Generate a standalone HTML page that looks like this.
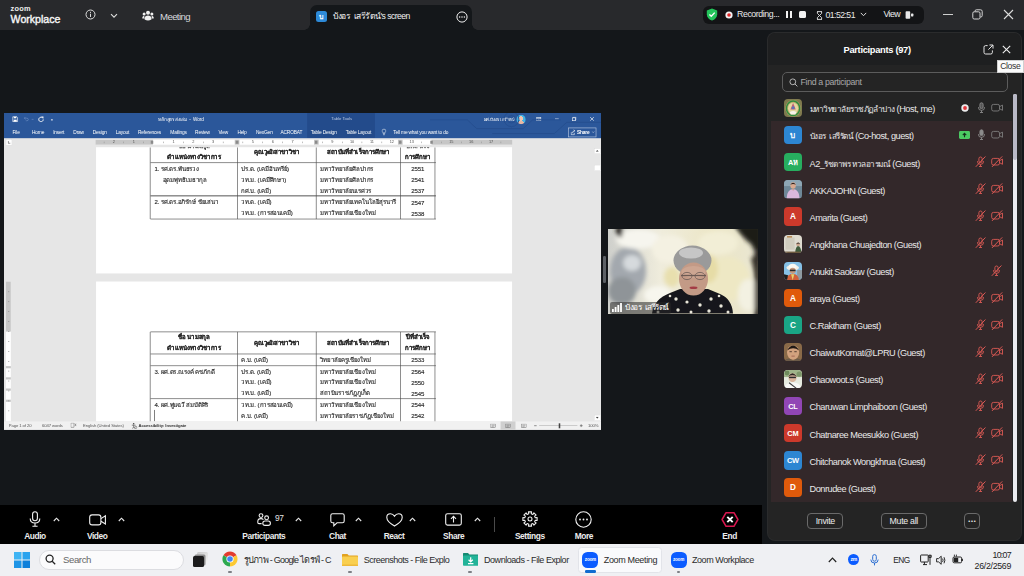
<!DOCTYPE html>
<html lang="th">
<head>
<meta charset="utf-8">
<title>Zoom Meeting</title>
<style>
*{box-sizing:border-box;margin:0;padding:0}
html,body{width:1024px;height:576px;overflow:hidden;background:#14171a;font-family:"Liberation Sans","DejaVu Sans",sans-serif;color:#e8e8e8}
.abs{position:absolute}
#stage{position:relative;width:1024px;height:576px;overflow:hidden;background:#14171a}
/* ---------- title bar ---------- */
#titlebar{left:0;top:0;width:1024px;height:30px;background:#28292c}
#tab{left:310px;top:5px;width:162px;height:25px;background:#14171a;border-radius:7px 7px 0 0}
#tab:before,#tab:after{content:"";position:absolute;bottom:0;width:6px;height:6px;background:radial-gradient(circle at 0 0,#28292c 5.5px,#14171a 6px)}
#tab:before{left:-6px}
#tab:after{right:-6px;background:radial-gradient(circle at 100% 0,#28292c 5.5px,#14171a 6px)}
.t{position:absolute;white-space:nowrap;line-height:1}
/* ---------- word ---------- */
#word{left:4px;top:112.6px;width:1920px;height:1019px;background:#e6e6e6;overflow:hidden;color:#222;transform:scale(.31094);transform-origin:0 0}
#wtitle{left:0;top:0;width:1920px;height:80.5px;background:#2b579a}
.w{line-height:1}
.rt{font-size:15.5px;color:#fff;text-align:center;letter-spacing:-.55px;line-height:18px}
.d{font-size:19.5px;line-height:36px;color:#2a2a2a;letter-spacing:-.25px;-webkit-text-stroke:.45px #2a2a2a}
.db{font-weight:bold;color:#111}
.sb{font-size:13.5px;color:#555;letter-spacing:-.3px;line-height:16px}
/* ---------- bottom ---------- */
#toolbar{left:0;top:504.7px;width:762.3px;height:39.3px;background:#000}
#taskbar{left:0;top:543.7px;width:1024px;height:32.3px;background:#eff0f3;color:#1b1b1b}
.tl{font-size:8.4px;font-weight:bold;color:#ededed;text-align:center;letter-spacing:-.42px;line-height:10px}
.kt{font-size:9px;color:#2b2b2b;line-height:11px}
.kc{font-size:8.8px;color:#222;letter-spacing:-.3px;line-height:10px}
.zi{width:16px;height:16px;border-radius:5.5px;background:#0b5cff;color:#fff;text-align:center}
.zi span{display:block;font-size:4.6px;font-weight:bold;line-height:16px;letter-spacing:-.2px}
/* ---------- participants ---------- */
#panel{left:768px;top:33px;width:253px;height:507px;background:#242424;border-radius:7px;overflow:hidden;box-shadow:0 0 0 1px #2a2b2c}
#phead{left:0;top:0;width:253px;height:31.5px;background:#1e1f20}
.av{width:18.2px;height:18.2px;border-radius:4px;overflow:hidden;text-align:center;color:#fff;font-weight:bold;line-height:19.4px}
.av span{display:block;letter-spacing:-.2px}
.av svg{display:block}
.pn{font-size:9.2px;color:#e9e9e9;letter-spacing:-.46px;line-height:11px}
.th{font-size:8.2px;letter-spacing:-.5px}
.pb{border:1px solid #6a6a6a;border-radius:4px;text-align:center;font-size:8.8px;color:#ededed;line-height:14.6px;letter-spacing:-.3px}
</style>
</head>
<body>
<div id="stage">

<!-- TITLE BAR -->
<div id="titlebar" class="abs">
  <div class="t" id="zm" style="left:10.6px;top:4.6px;font-size:7.4px;font-weight:bold;color:#ededed;letter-spacing:.25px">zoom</div>
  <div class="t" id="wp" style="left:10.6px;top:14.4px;font-size:10.6px;color:#f5f5f5;letter-spacing:0px;-webkit-text-stroke:.4px #f5f5f5">Workplace</div>
  <svg class="abs" style="left:85px;top:8.5px" width="11" height="11" viewBox="0 0 11 11"><circle cx="5.5" cy="5.5" r="4.5" fill="none" stroke="#ddd" stroke-width="1"/><rect x="5" y="4.7" width="1" height="3.3" fill="#ddd"/><rect x="5" y="2.8" width="1" height="1.1" fill="#ddd"/></svg>
  <svg class="abs" style="left:109.5px;top:12.5px" width="8" height="6" viewBox="0 0 8 6"><path d="M1 1.2 L4 4.2 L7 1.2" fill="none" stroke="#ddd" stroke-width="1.1"/></svg>
  <svg class="abs" style="left:142px;top:10px" width="12" height="12" viewBox="0 0 12 12" fill="#f0f0f0"><circle cx="6" cy="2.7" r="2"/><circle cx="2.1" cy="3.9" r="1.5"/><circle cx="9.9" cy="3.9" r="1.5"/><path d="M2.6 8.2 C2.6 6.4 4.2 5.4 6 5.4 C7.8 5.4 9.4 6.4 9.4 8.2 L9.4 9.6 Q6 11.6 2.6 9.6 Z"/><path d="M0.3 7.8 C0.3 6.6 1.2 6 2.3 6 L2.3 8.6 L0.3 8.6 Z"/><path d="M11.7 7.8 C11.7 6.6 10.8 6 9.7 6 L9.7 8.6 L11.7 8.6 Z"/></svg>
  <div class="t" id="mt" style="left:160px;top:11.7px;font-size:9.6px;color:#d6d9dd;letter-spacing:-.6px">Meeting</div>

  <!-- right pill -->
  <div class="abs" style="left:702.5px;top:6px;width:221.5px;height:17.5px;border-radius:6px;background:#131416"></div>
  <svg class="abs" style="left:705.5px;top:8px" width="12" height="13" viewBox="0 0 12 13"><path d="M6 0.6 L11.2 2.4 V6.2 C11.2 9.4 8.8 11.6 6 12.6 C3.2 11.6 0.8 9.4 0.8 6.2 V2.4 Z" fill="#23c45b"/><path d="M3.4 6.4 L5.3 8.3 L8.7 4.6" fill="none" stroke="#fff" stroke-width="1.4"/></svg>
  <svg class="abs" style="left:724.5px;top:10.5px" width="8" height="8" viewBox="0 0 8 8"><circle cx="4" cy="4" r="3.6" fill="#f3f3f3"/><circle cx="4" cy="4" r="1.8" fill="#e02828"/></svg>
  <div class="t" id="rec" style="left:737px;top:10.2px;font-size:8.8px;color:#e9e9e9;letter-spacing:-.43px">Recording...</div>
  <div class="abs" style="left:786px;top:11px;width:2px;height:7px;background:#f2f2f2"></div>
  <div class="abs" style="left:789.5px;top:11px;width:2px;height:7px;background:#f2f2f2"></div>
  <div class="abs" style="left:798.5px;top:11px;width:7px;height:7px;border-radius:1.5px;background:#f2f2f2"></div>
  <svg class="abs" style="left:816px;top:10.5px" width="7" height="9" viewBox="0 0 7 9"><path d="M1 0.6 H6 M1 8.4 H6 M1.4 0.8 V2.4 L3.5 4.5 L5.6 2.4 V0.8 M1.4 8.2 V6.6 L3.5 4.5 L5.6 6.6 V8.2" fill="none" stroke="#e6e6e6" stroke-width=".9"/></svg>
  <div class="t" id="tm" style="left:825.5px;top:10.6px;font-size:8.7px;color:#e9e9e9;letter-spacing:-.55px">01:52:51</div>
  <svg class="abs" style="left:860px;top:12px" width="7" height="5" viewBox="0 0 7 5"><path d="M0.8 0.9 L3.5 3.7 L6.2 0.9" fill="none" stroke="#ddd" stroke-width="1"/></svg>
  <div class="t" id="vw" style="left:883.5px;top:10.2px;font-size:8.8px;color:#ededed;letter-spacing:-.6px">View</div>
  <svg class="abs" style="left:904.5px;top:10.5px" width="9" height="8" viewBox="0 0 9 8"><rect x="0.6" y="0.3" width="4.6" height="7.4" rx=".8" fill="#e8e8e8"/><rect x="6" y="2.6" width="2.4" height="2.8" rx=".6" fill="#e8e8e8"/></svg>
  <!-- window controls -->
  <div class="abs" style="left:942.5px;top:14px;width:10px;height:1px;background:#cfcfcf"></div>
  <svg class="abs" style="left:971.5px;top:9px" width="11" height="11" viewBox="0 0 11 11" fill="none" stroke="#d4d4d4" stroke-width="1"><rect x="0.8" y="2.8" width="7.2" height="7.2" rx="1.4"/><path d="M3 2.6 V2.2 Q3 0.8 4.4 0.8 H8.6 Q10.2 0.8 10.2 2.4 V6.6 Q10.2 8 8.8 8 H8.2"/></svg>
  <svg class="abs" style="left:1002.5px;top:9px" width="11" height="11" viewBox="0 0 11 11"><path d="M1 1 L10 10 M10 1 L1 10" stroke="#dcdcdc" stroke-width="1.1" fill="none"/></svg>
</div>
<div id="tab" class="abs">
  <div class="abs" style="left:6.2px;top:6.3px;width:10.6px;height:10.6px;border-radius:2.5px;background:#2d8ad8"></div>
  <div class="t" style="left:6.2px;top:7.6px;width:10.6px;text-align:center;font-size:7px;color:#fff;font-weight:bold">บ</div>
  <div class="t" id="tabt" style="left:23.3px;top:7px;font-size:8.6px;color:#f2f2f2;letter-spacing:-.55px">บังอร&nbsp; เสรีรัตน์'s screen</div>
  <svg class="abs" style="left:145.5px;top:5.7px" width="12" height="12" viewBox="0 0 12 12"><circle cx="6" cy="6" r="5.1" fill="none" stroke="#f0f0f0" stroke-width="1"/><circle cx="3.6" cy="6" r=".75" fill="#f0f0f0"/><circle cx="6" cy="6" r=".75" fill="#f0f0f0"/><circle cx="8.4" cy="6" r=".75" fill="#f0f0f0"/></svg>
</div>

<!-- WORD WINDOW -->
<div id="word" class="abs">
<div id="wtitle" class="abs"></div>
<div class="abs" style="left:974.5px;top:0;width:218.70000000000005px;height:80px;background:#234b8b"></div>
<svg class="abs" style="left:26.0px;top:9.899999999999999px" width="20" height="20" viewBox="0 0 28 28"><path d="M3 3 H22 L25 6 V25 H3 Z" fill="none" stroke="#fff" stroke-width="3"/><rect x="8" y="3" width="11" height="7" fill="#fff"/><rect x="7" y="16" width="14" height="9" fill="#fff"/></svg>
<svg class="abs" style="left:62.7px;top:11.399999999999999px" width="18" height="17" viewBox="0 0 26 24"><path d="M4 8 H15 Q22 8 22 14 Q22 20 15 20 H10 M9 2 L3 8 L9 14" fill="none" stroke="#6f8fc4" stroke-width="3"/></svg>
<div class="abs" style="left:88.8px;top:19.3px;width:6px;height:2px;background:#6f8fc4"></div>
<svg class="abs" style="left:109.0px;top:9.899999999999999px" width="20" height="20" viewBox="0 0 28 28"><path d="M21 8 A10 10 0 1 0 24 15" fill="none" stroke="#fff" stroke-width="4.4"/><path d="M15 2 H25 V12 Z" fill="#fff"/></svg>
<div class="abs" style="left:151.4px;top:20.4px;width:6px;height:4px;background:#cfd9ea"></div>
<div class="t w" style="left:496.2px;top:12.899999999999999px;font-size:15px;color:#fff;letter-spacing:-.3px" id="wtt">หลักสูตรส่งเล่ม&nbsp; -&nbsp; Word</div>
<div class="t w" style="left:1052.6px;top:12.899999999999999px;font-size:13.5px;color:#b9c8e2">Table Tools</div>
<div class="t w" style="left:1543.7px;top:12.899999999999999px;font-size:14px;color:#fff;letter-spacing:-.5px" id="wuser">ผศ.บังอร เสรีรัตน์</div>
<div class="abs" style="left:1647.7px;top:5.899999999999999px;width:30px;height:30px;border-radius:50%;background:radial-gradient(circle at 50% 38%,#f0c4b0 0 30%,transparent 31%),radial-gradient(ellipse 42% 34% at 50% 100%,#e8b8a4 0 98%,transparent 100%),#43b3e4"></div>
<svg class="abs" style="left:1711.9px;top:12.5px" width="16" height="13" viewBox="0 0 22 18"><rect x="1.2" y="1.2" width="19.6" height="15.6" fill="none" stroke="#fff" stroke-width="2.6"/><path d="M1 6 H21" stroke="#fff" stroke-width="2.4"/><path d="M8 14 L11 10 L14 14" fill="none" stroke="#fff" stroke-width="2.4"/></svg>
<div class="abs" style="left:1771.5px;top:18.0px;width:12px;height:2px;background:#e8eef8"></div>
<svg class="abs" style="left:1826.8px;top:12.3px" width="14" height="14" viewBox="0 0 18 18"><rect x="1.5" y="4.5" width="12" height="12" fill="none" stroke="#fff" stroke-width="2.6"/><path d="M5 4 V1.5 H16.5 V13 H14" fill="none" stroke="#fff" stroke-width="2.6"/></svg>
<svg class="abs" style="left:1884.0px;top:12.3px" width="14" height="14" viewBox="0 0 18 18"><path d="M1.5 1.5 L16.5 16.5 M16.5 1.5 L1.5 16.5" stroke="#fff" stroke-width="2.8"/></svg>
<svg class="abs" style="left:1370.0px;top:0" width="550" height="80" viewBox="0 0 550 80" fill="none" stroke="#264f8f" stroke-width="3"><path d="M0 22 H120 L150 50 H300 L330 22 H420"/><path d="M200 66 H400 L440 30 H550"/><circle cx="262" cy="20" r="24"/><circle cx="262" cy="20" r="12"/></svg>
<div class="t w rt" id="rt0" style="left:25.7px;top:52.7px;width:26.7px">File</div>
<div class="t w rt" id="rt1" style="left:90.0px;top:52.7px;width:38.6px">Home</div>
<div class="t w rt" id="rt2" style="left:157.6px;top:52.7px;width:36.3px">Insert</div>
<div class="t w rt" id="rt3" style="left:221.9px;top:52.7px;width:36.3px">Draw</div>
<div class="t w rt" id="rt4" style="left:284.6px;top:52.7px;width:46.7px">Design</div>
<div class="t w rt" id="rt5" style="left:358.6px;top:52.7px;width:45.0px">Layout</div>
<div class="t w rt" id="rt6" style="left:431.0px;top:52.7px;width:72.3px">References</div>
<div class="t w rt" id="rt7" style="left:530.6px;top:52.7px;width:61.2px">Mailings</div>
<div class="t w rt" id="rt8" style="left:614.3px;top:52.7px;width:48.2px">Review</div>
<div class="t w rt" id="rt9" style="left:688.2px;top:52.7px;width:33.8px">View</div>
<div class="t w rt" id="rt10" style="left:749.3px;top:52.7px;width:32.2px">Help</div>
<div class="t w rt" id="rt11" style="left:810.4px;top:52.7px;width:51.5px">NexGen</div>
<div class="t w rt" id="rt12" style="left:889.2px;top:52.7px;width:66.0px">ACROBAT</div>
<div class="t w rt" id="rt13" style="left:985.7px;top:52.7px;width:85.2px">Table Design</div>
<div class="t w rt" id="rt14" style="left:1098.3px;top:52.7px;width:83.6px">Table Layout</div>
<div class="t w rt" id="rt15" style="left:1246.2px;top:52.7px;width:188.2px">Tell me what you want to do</div>
<svg class="abs" style="left:1214.1px;top:49.5px" width="16" height="22" viewBox="0 0 16 22"><path d="M8 1.5 A6 6 0 0 1 11.5 12.4 V15 H4.5 V12.4 A6 6 0 0 1 8 1.5 Z" fill="none" stroke="#fff" stroke-width="1.8"/><path d="M5 18 H11 M6 21 H10" stroke="#fff" stroke-width="1.8"/></svg>
<div class="abs" style="left:1813.9px;top:47.3px;width:91.0px;height:30.5px;border:2px solid #b9c8e2"></div>
<svg class="abs" style="left:1821.9px;top:51.5px" width="16" height="20" viewBox="0 0 16 20"><path d="M2 9 V18 H12 V12" fill="none" stroke="#fff" stroke-width="2"/><path d="M6 13 Q6 6 13 5 M10 1.5 L14 5 L10 8.5" fill="none" stroke="#fff" stroke-width="2"/></svg>
<div class="t w" style="left:1842.8px;top:53.1px;font-size:15.5px;font-weight:bold;color:#fff;letter-spacing:-.5px" id="wshare">Share</div>
<svg class="abs" style="left:1890.0px;top:58.4px" width="10" height="7" viewBox="0 0 10 7"><path d="M1 1 L5 5.5 L9 1" fill="none" stroke="#cfd9ea" stroke-width="1.6"/></svg>
<div class="abs" style="left:6.4px;top:84.9px;width:19.7px;height:19.6px;background:#fff;border:1px solid #d0d0d0"></div>
<svg class="abs" style="left:12.2px;top:90.4px" width="9" height="9" viewBox="0 0 9 9"><path d="M1.5 0 V7.5 H9" fill="none" stroke="#444" stroke-width="2.2"/></svg>
<div class="abs" style="left:294.3px;top:85.9px;width:1340.4px;height:16.0px;background:#fff"></div>
<div class="abs" style="left:294.3px;top:85.9px;width:184.89999999999998px;height:16.0px;background:#c6c6c6"></div>
<div class="abs" style="left:1374.9px;top:85.9px;width:259.79999999999995px;height:16.0px;background:#c6c6c6"></div>
<div class="abs" style="left:742.3px;top:85.9px;width:14.8px;height:16.0px;background:#c6c6c6"></div>
<div class="abs" style="left:745.2px;top:88.9px;width:8.4px;height:10.0px;background:#8a8a8a"></div>
<div class="abs" style="left:997.0px;top:85.9px;width:14.8px;height:16.0px;background:#c6c6c6"></div>
<div class="abs" style="left:999.9px;top:88.9px;width:8.4px;height:10.0px;background:#8a8a8a"></div>
<div class="abs" style="left:1267.1px;top:85.9px;width:14.8px;height:16.0px;background:#c6c6c6"></div>
<div class="abs" style="left:1270.0px;top:88.9px;width:8.4px;height:10.0px;background:#8a8a8a"></div>
<div class="abs" style="left:471.5px;top:88.9px;width:8.4px;height:10.0px;background:#8a8a8a"></div>
<div class="abs" style="left:1370.7px;top:88.9px;width:8.4px;height:10.0px;background:#8a8a8a"></div>
<div class="t w" style="left:533.0px;top:88.4px;width:24px;text-align:center;font-size:12.5px;color:#505050">1</div>
<div class="t w" style="left:596.8px;top:88.4px;width:24px;text-align:center;font-size:12.5px;color:#505050">2</div>
<div class="t w" style="left:660.6px;top:88.4px;width:24px;text-align:center;font-size:12.5px;color:#505050">3</div>
<div class="t w" style="left:788.3px;top:88.4px;width:24px;text-align:center;font-size:12.5px;color:#505050">5</div>
<div class="t w" style="left:852.2px;top:88.4px;width:24px;text-align:center;font-size:12.5px;color:#505050">6</div>
<div class="t w" style="left:916.0px;top:88.4px;width:24px;text-align:center;font-size:12.5px;color:#505050">7</div>
<div class="t w" style="left:1043.7px;top:88.4px;width:24px;text-align:center;font-size:12.5px;color:#505050">9</div>
<div class="t w" style="left:1107.5px;top:88.4px;width:24px;text-align:center;font-size:12.5px;color:#505050">10</div>
<div class="t w" style="left:1171.3px;top:88.4px;width:24px;text-align:center;font-size:12.5px;color:#505050">11</div>
<div class="t w" style="left:1235.2px;top:88.4px;width:24px;text-align:center;font-size:12.5px;color:#505050">12</div>
<div class="t w" style="left:1299.0px;top:88.4px;width:24px;text-align:center;font-size:12.5px;color:#505050">13</div>
<div class="t w" style="left:1426.7px;top:88.4px;width:24px;text-align:center;font-size:12.5px;color:#505050">15</div>
<div class="t w" style="left:1490.5px;top:88.4px;width:24px;text-align:center;font-size:12.5px;color:#505050">16</div>
<div class="t w" style="left:1554.4px;top:88.4px;width:24px;text-align:center;font-size:12.5px;color:#505050">17</div>
<div class="t w" style="left:341.4px;top:88.4px;width:24px;text-align:center;font-size:12.5px;color:#505050">2</div>
<div class="t w" style="left:405.3px;top:88.4px;width:24px;text-align:center;font-size:12.5px;color:#505050">1</div>
<div class="abs" style="left:320.5px;top:91.9px;width:2px;height:5px;background:#999"></div>
<div class="abs" style="left:384.4px;top:91.9px;width:2px;height:5px;background:#999"></div>
<div class="abs" style="left:448.2px;top:91.9px;width:2px;height:5px;background:#999"></div>
<div class="abs" style="left:512.0px;top:91.9px;width:2px;height:5px;background:#999"></div>
<div class="abs" style="left:575.9px;top:91.9px;width:2px;height:5px;background:#999"></div>
<div class="abs" style="left:639.7px;top:91.9px;width:2px;height:5px;background:#999"></div>
<div class="abs" style="left:703.6px;top:91.9px;width:2px;height:5px;background:#999"></div>
<div class="abs" style="left:767.4px;top:91.9px;width:2px;height:5px;background:#999"></div>
<div class="abs" style="left:831.2px;top:91.9px;width:2px;height:5px;background:#999"></div>
<div class="abs" style="left:895.1px;top:91.9px;width:2px;height:5px;background:#999"></div>
<div class="abs" style="left:958.9px;top:91.9px;width:2px;height:5px;background:#999"></div>
<div class="abs" style="left:1022.8px;top:91.9px;width:2px;height:5px;background:#999"></div>
<div class="abs" style="left:1086.6px;top:91.9px;width:2px;height:5px;background:#999"></div>
<div class="abs" style="left:1150.4px;top:91.9px;width:2px;height:5px;background:#999"></div>
<div class="abs" style="left:1214.3px;top:91.9px;width:2px;height:5px;background:#999"></div>
<div class="abs" style="left:1278.1px;top:91.9px;width:2px;height:5px;background:#999"></div>
<div class="abs" style="left:1341.9px;top:91.9px;width:2px;height:5px;background:#999"></div>
<div class="abs" style="left:1405.8px;top:91.9px;width:2px;height:5px;background:#999"></div>
<div class="abs" style="left:1469.6px;top:91.9px;width:2px;height:5px;background:#999"></div>
<div class="abs" style="left:1533.5px;top:91.9px;width:2px;height:5px;background:#999"></div>
<div class="abs" style="left:1597.3px;top:91.9px;width:2px;height:5px;background:#999"></div>
<div class="abs" style="left:295.9px;top:110.3px;width:1337.9px;height:405.9px;background:#fff"></div>
<div class="abs" style="left:295.9px;top:541.9px;width:1337.9px;height:450.30000000000007px;background:#fff"></div>
<div class="abs" style="left:0;top:111.0px;width:1920px;height:405.20000000000005px;overflow:hidden"><div class="abs" style="left:0;top:-111.0px;width:1920px;height:1020px">
<div class="t w d db" style="left:470.5px;top:88.4px;width:280.4px;text-align:center;">ชื่อ นามสกุล</div>
<div class="t w d db" style="left:470.5px;top:123.5px;width:280.4px;text-align:center;">ตำแหน่งทางวิชาการ</div>
<div class="t w d db" style="left:750.9px;top:105.8px;width:253.1px;text-align:center;">คุณวุฒิ/สาขาวิชา</div>
<div class="t w d db" style="left:1004.1px;top:105.8px;width:271.1px;text-align:center;">สถาบันที่สำเร็จการศึกษา</div>
<div class="t w d db" style="left:1275.2px;top:88.4px;width:111.0px;text-align:center;">ปีที่สำเร็จ</div>
<div class="t w d db" style="left:1275.2px;top:123.5px;width:111.0px;text-align:center;">การศึกษา</div>
<div class="abs" style="left:470.5px;top:159.0px;width:918.0px;height:2.2px;background:#4a4a4a"></div>
<div class="abs" style="left:470.5px;top:265.40000000000003px;width:918.0px;height:2.2px;background:#4a4a4a"></div>
<div class="abs" style="left:470.5px;top:339.7px;width:918.0px;height:2.2px;background:#4a4a4a"></div>
<div class="abs" style="left:469.3px;top:88.4px;width:2.2px;height:252.5px;background:#4a4a4a"></div>
<div class="abs" style="left:749.6999999999999px;top:88.4px;width:2.2px;height:252.5px;background:#4a4a4a"></div>
<div class="abs" style="left:1002.9px;top:88.4px;width:2.2px;height:252.5px;background:#4a4a4a"></div>
<div class="abs" style="left:1274.0px;top:88.4px;width:2.2px;height:252.5px;background:#4a4a4a"></div>
<div class="abs" style="left:1384.8999999999999px;top:88.4px;width:2.2px;height:252.5px;background:#4a4a4a"></div>
<div class="t w d" style="left:483.7px;top:161.1px;">1. รศ.ดร.พันธรวง</div>
<div class="t w d" style="left:510.7px;top:196.5px;">อุดมพุทธิเมธากุล</div>
<div class="t w d" style="left:763.8px;top:161.1px;">ปร.ด. (เคมีอินทรีย์)</div>
<div class="t w d" style="left:1016.3px;top:161.1px;">มหาวิทยาลัยศิลปากร</div>
<div class="t w d" style="left:1275.2px;top:162.1px;width:111.0px;text-align:center;">2551</div>
<div class="t w d" style="left:763.8px;top:196.5px;">วท.ม. (เคมีศึกษา)</div>
<div class="t w d" style="left:1016.3px;top:196.5px;">มหาวิทยาลัยศิลปากร</div>
<div class="t w d" style="left:1275.2px;top:197.4px;width:111.0px;text-align:center;">2541</div>
<div class="t w d" style="left:763.8px;top:231.2px;">กศ.บ. (เคมี)</div>
<div class="t w d" style="left:1016.3px;top:231.2px;">มหาวิทยาลัยนเรศวร</div>
<div class="t w d" style="left:1275.2px;top:232.2px;width:111.0px;text-align:center;">2537</div>
<div class="t w d" style="left:483.7px;top:268.8px;">2. รศ.ดร.อภิรักษ์ ชัยเสนา</div>
<div class="t w d" style="left:763.8px;top:268.8px;">วท.ด. (เคมี)</div>
<div class="t w d" style="left:1016.3px;top:268.8px;">มหาวิทยาลัยเทคโนโลยีสุรนารี</div>
<div class="t w d" style="left:1275.2px;top:269.8px;width:111.0px;text-align:center;">2547</div>
<div class="t w d" style="left:763.8px;top:303.6px;">วท.ม. (การสอนเคมี)</div>
<div class="t w d" style="left:1016.3px;top:303.6px;">มหาวิทยาลัยเชียงใหม่</div>
<div class="t w d" style="left:1275.2px;top:304.5px;width:111.0px;text-align:center;">2538</div>
</div></div>
<div class="abs" style="left:0;top:541.9px;width:1920px;height:450.30000000000007px;overflow:hidden"><div class="abs" style="left:0;top:-541.9px;width:1920px;height:1020px">
<div class="t w d db" style="left:470.5px;top:702.7px;width:280.4px;text-align:center;">ชื่อ นามสกุล</div>
<div class="t w d db" style="left:470.5px;top:737.7px;width:280.4px;text-align:center;">ตำแหน่งทางวิชาการ</div>
<div class="t w d db" style="left:750.9px;top:720.1px;width:253.1px;text-align:center;">คุณวุฒิ/สาขาวิชา</div>
<div class="t w d db" style="left:1004.1px;top:720.1px;width:271.1px;text-align:center;">สถาบันที่สำเร็จการศึกษา</div>
<div class="t w d db" style="left:1275.2px;top:702.7px;width:111.0px;text-align:center;">ปีที่สำเร็จ</div>
<div class="t w d db" style="left:1275.2px;top:737.7px;width:111.0px;text-align:center;">การศึกษา</div>
<div class="abs" style="left:470.5px;top:703.0999999999999px;width:918.0px;height:2.2px;background:#4a4a4a"></div>
<div class="abs" style="left:470.5px;top:773.9px;width:918.0px;height:2.2px;background:#4a4a4a"></div>
<div class="abs" style="left:470.5px;top:811.8px;width:918.0px;height:2.2px;background:#4a4a4a"></div>
<div class="abs" style="left:470.5px;top:917.9px;width:918.0px;height:2.2px;background:#4a4a4a"></div>
<div class="abs" style="left:469.3px;top:704.3px;width:2.2px;height:300.7px;background:#4a4a4a"></div>
<div class="abs" style="left:749.6999999999999px;top:704.3px;width:2.2px;height:300.7px;background:#4a4a4a"></div>
<div class="abs" style="left:1002.9px;top:704.3px;width:2.2px;height:300.7px;background:#4a4a4a"></div>
<div class="abs" style="left:1274.0px;top:704.3px;width:2.2px;height:300.7px;background:#4a4a4a"></div>
<div class="abs" style="left:1384.8999999999999px;top:704.3px;width:2.2px;height:300.7px;background:#4a4a4a"></div>
<div class="t w d" style="left:483.7px;top:774.7px;"></div>
<div class="t w d" style="left:763.8px;top:774.7px;">ค.บ. (เคมี)</div>
<div class="t w d" style="left:1016.3px;top:774.7px;">วิทยาลัยครูเชียงใหม่</div>
<div class="t w d" style="left:1275.2px;top:775.7px;width:111.0px;text-align:center;">2533</div>
<div class="t w d" style="left:483.7px;top:812.7px;">3. ผศ.ดร.ณรงค์ คชภักดี</div>
<div class="t w d" style="left:763.8px;top:812.7px;">ปร.ด. (เคมี)</div>
<div class="t w d" style="left:1016.3px;top:812.7px;">มหาวิทยาลัยเชียงใหม่</div>
<div class="t w d" style="left:1275.2px;top:813.6px;width:111.0px;text-align:center;">2564</div>
<div class="t w d" style="left:763.8px;top:847.7px;">วท.ม. (เคมี)</div>
<div class="t w d" style="left:1016.3px;top:847.7px;">มหาวิทยาลัยเชียงใหม่</div>
<div class="t w d" style="left:1275.2px;top:848.7px;width:111.0px;text-align:center;">2550</div>
<div class="t w d" style="left:763.8px;top:882.8px;">วท.บ. (เคมี)</div>
<div class="t w d" style="left:1016.3px;top:882.8px;">สถาบันราชภัฏภูเก็ต</div>
<div class="t w d" style="left:1275.2px;top:883.8px;width:111.0px;text-align:center;">2545</div>
<div class="t w d" style="left:483.7px;top:920.1px;">4. ผศ.พูนฉวี สมบัติศิริ</div>
<div class="t w d" style="left:763.8px;top:920.1px;">วท.ม. (การสอนเคมี)</div>
<div class="t w d" style="left:1016.3px;top:920.1px;">มหาวิทยาลัยเชียงใหม่</div>
<div class="t w d" style="left:1275.2px;top:921.1px;width:111.0px;text-align:center;">2544</div>
<div class="t w d" style="left:763.8px;top:955.5px;">ค.บ. (เคมี)</div>
<div class="t w d" style="left:1016.3px;top:955.5px;">มหาวิทยาลัยราชภัฏเชียงใหม่</div>
<div class="t w d" style="left:1275.2px;top:956.4px;width:111.0px;text-align:center;">2542</div>
<div class="abs" style="left:483.4px;top:955.2px;width:2px;height:37.0px;background:#333"></div>
</div></div>
<div class="abs" style="left:5.8px;top:541.9px;width:16.7px;height:450.30000000000007px;background:#fff"></div>
<div class="abs" style="left:5.8px;top:541.9px;width:16.7px;height:160.80000000000007px;background:#c6c6c6"></div>
<div class="abs" style="left:5.8px;top:813.7px;width:16.7px;height:7.1px;background:#c6c6c6"></div>
<div class="abs" style="left:5.8px;top:850.0px;width:16.7px;height:7.1px;background:#c6c6c6"></div>
<div class="abs" style="left:5.8px;top:886.0px;width:16.7px;height:7.1px;background:#c6c6c6"></div>
<div class="abs" style="left:5.8px;top:922.0px;width:16.7px;height:7.1px;background:#c6c6c6"></div>
<div class="abs" style="left:12.9px;top:574.1px;width:4px;height:2px;background:#8a8a8a"></div>
<div class="abs" style="left:12.9px;top:606.0px;width:4px;height:2px;background:#8a8a8a"></div>
<div class="abs" style="left:12.9px;top:637.9px;width:4px;height:2px;background:#8a8a8a"></div>
<div class="abs" style="left:12.9px;top:669.8px;width:4px;height:2px;background:#8a8a8a"></div>
<div class="abs" style="left:12.9px;top:701.7px;width:4px;height:2px;background:#8a8a8a"></div>
<div class="abs" style="left:12.9px;top:733.7px;width:4px;height:2px;background:#8a8a8a"></div>
<div class="abs" style="left:12.9px;top:765.6px;width:4px;height:2px;background:#8a8a8a"></div>
<div class="abs" style="left:12.9px;top:797.5px;width:4px;height:2px;background:#8a8a8a"></div>
<div class="abs" style="left:12.9px;top:829.4px;width:4px;height:2px;background:#8a8a8a"></div>
<div class="abs" style="left:12.9px;top:861.3px;width:4px;height:2px;background:#8a8a8a"></div>
<div class="abs" style="left:12.9px;top:893.3px;width:4px;height:2px;background:#8a8a8a"></div>
<div class="abs" style="left:12.9px;top:925.2px;width:4px;height:2px;background:#8a8a8a"></div>
<div class="abs" style="left:12.9px;top:957.1px;width:4px;height:2px;background:#8a8a8a"></div>
<div class="abs" style="left:1898.4px;top:113.5px;width:20.299999999999955px;height:17.400000000000006px;background:#fff;border:1px solid #cfcfcf"></div>
<svg class="abs" style="left:1903.4px;top:119.2px" width="10" height="6" viewBox="0 0 10 6"><path d="M0 6 L5 0 L10 6Z" fill="#444"/></svg>
<div class="abs" style="left:1898.4px;top:166.6px;width:20.299999999999955px;height:19.30000000000001px;background:#fff;border:1px solid #cfcfcf"></div>
<div class="abs" style="left:1898.4px;top:970.6px;width:20.299999999999955px;height:19.299999999999955px;background:#fff;border:1px solid #cfcfcf"></div>
<svg class="abs" style="left:1903.4px;top:977.3px" width="10" height="6" viewBox="0 0 10 6"><path d="M0 0 L5 6 L10 0Z" fill="#444"/></svg>
<div class="abs" style="left:0;top:992.2px;width:1920px;height:29.8px;background:#f1f1f1"></div>
<div class="t w sb" id="sb1" style="left:15.4px;top:997.7px;">Page 1 of 20</div>
<div class="t w sb" id="sb2" style="left:122.2px;top:997.7px;">6047 words</div>
<div class="t w sb" id="sb3" style="left:254.1px;top:997.7px;">English (United States)</div>
<div class="t w sb" id="sb4" style="left:432.6px;top:997.7px;font-weight:bold;color:#333">Accessibility: Investigate</div>
<svg class="abs" style="left:213.9px;top:996.3px" width="20" height="18" viewBox="0 0 20 18"><rect x="1" y="1" width="10" height="14" rx="1" fill="none" stroke="#666" stroke-width="1.6"/><path d="M14 3 L18 11 M18 3 L14 11" stroke="#666" stroke-width="1.6"/></svg>
<svg class="abs" style="left:409.4px;top:996.0px" width="20" height="20" viewBox="0 0 20 20"><circle cx="8" cy="3.5" r="2.5" fill="#444"/><path d="M2 8 H14 M8 8 V13 M8 13 L4.5 19 M8 13 L11.5 19" stroke="#444" stroke-width="2" fill="none"/><circle cx="15" cy="15" r="3.6" fill="none" stroke="#444" stroke-width="1.6"/></svg>
<div class="abs" style="left:1596.8px;top:992.2px;width:48.200000000000045px;height:27.8px;background:#cfcfcf"></div>
<svg class="abs" style="left:1563.7px;top:998.7px" width="18" height="14" viewBox="0 0 18 14"><rect x="1" y="1" width="16" height="12" fill="none" stroke="#6a6a6a" stroke-width="1.6"/><path d="M4 4.5 H14 M4 7.5 H14 M4 10.5 H11" stroke="#6a6a6a" stroke-width="1.3"/></svg>
<svg class="abs" style="left:1611.9px;top:998.7px" width="18" height="14" viewBox="0 0 18 14"><rect x="1" y="1" width="16" height="12" fill="none" stroke="#6a6a6a" stroke-width="1.6"/><path d="M4 4.5 H14 M4 7.5 H14 M4 10.5 H11" stroke="#6a6a6a" stroke-width="1.3"/></svg>
<svg class="abs" style="left:1663.3px;top:998.7px" width="18" height="14" viewBox="0 0 18 14"><rect x="1" y="1" width="16" height="12" fill="none" stroke="#6a6a6a" stroke-width="1.6"/><path d="M4 4.5 H14 M4 7.5 H14 M4 10.5 H11" stroke="#6a6a6a" stroke-width="1.3"/></svg>
<div class="abs" style="left:1704.5px;top:1004.7px;width:8px;height:2px;background:#555"></div>
<div class="abs" style="left:1720.6px;top:1005.0px;width:123.80000000000018px;height:1.4px;background:#777"></div>
<div class="abs" style="left:1783.7px;top:997.7px;width:5px;height:16px;background:#444"></div>
<div class="abs" style="left:1851.7px;top:1004.7px;width:9px;height:2px;background:#555"></div><div class="abs" style="left:1855.2px;top:1001.2px;width:2px;height:9px;background:#555"></div>
<div class="t w sb" id="sb5" style="left:1878.2px;top:997.7px;">100%</div>
</div>

<!-- VIDEO TILE -->
<div class="abs" style="left:603px;top:256px;width:2.6px;height:27px;border-radius:1.3px;background:#5d6166"></div>
<div id="tile" class="abs" style="left:608px;top:229px;width:150px;height:84.5px;overflow:hidden;background:#e4e0cb">
<svg class="abs" style="left:0;top:0" width="150" height="84.5" viewBox="0 0 150 84.5">
  <defs>
    <filter id="bl" x="-20%" y="-20%" width="140%" height="140%"><feGaussianBlur stdDeviation="2.2"/></filter>
    <filter id="bs" x="-20%" y="-20%" width="140%" height="140%"><feGaussianBlur stdDeviation=".7"/></filter>
    <linearGradient id="bgg" x1="0" y1="0" x2="1" y2="0"><stop offset="0" stop-color="#cfd0cc"/><stop offset=".35" stop-color="#efecdc"/><stop offset=".7" stop-color="#ece6c6"/><stop offset="1" stop-color="#e9e6d2"/></linearGradient>
  </defs>
  <rect width="150" height="84.5" fill="url(#bgg)"/>
  <g filter="url(#bl)">
    <ellipse cx="20" cy="42" rx="18" ry="24" fill="#a3a8ae"/><ellipse cx="24" cy="34" rx="9" ry="8" fill="#d6dadd"/>
    <ellipse cx="14" cy="62" rx="14" ry="14" fill="#8f9498"/>
    <ellipse cx="30" cy="10" rx="22" ry="10" fill="#f6f5ee"/>
    <ellipse cx="50" cy="66" rx="14" ry="9" fill="#f7f6ee"/>
    <ellipse cx="62" cy="20" rx="18" ry="14" fill="#f4f1e2"/>
    <ellipse cx="110" cy="14" rx="20" ry="12" fill="#f2eed6"/>
    <ellipse cx="120" cy="50" rx="22" ry="22" fill="#eee8c4"/>
    <ellipse cx="100" cy="40" rx="10" ry="14" fill="#e6dca6"/>
    <ellipse cx="64" cy="48" rx="8" ry="10" fill="#e8dfae"/>
    <ellipse cx="140" cy="66" rx="10" ry="16" fill="#f3f1e2"/>
    <path d="M126 -4 H154 V30 Q147 24 143 15 Q134 9 126 -4Z" fill="#1e1b17"/><rect x="146.5" y="20" width="6" height="70" fill="#2b2722"/>
    <path d="M146 26 Q152 40 150 84 H147 Q149 50 143 30Z" fill="#3a352c"/>
    <path d="M8 -3 H15 L14 8 Q10 9 8 4Z" fill="#2a2824"/>
  </g>
  <g filter="url(#bs)">
    <path d="M44 84.5 Q46 70 62 64 L72 60 H100 L112 65 Q124 70 125 84.5Z" fill="#16171a"/>
    <ellipse cx="84.5" cy="31.5" rx="19" ry="15" fill="#9a9a9a"/>
    <ellipse cx="83" cy="24" rx="12" ry="5.5" fill="#c6c6c6"/>
    <ellipse cx="85.5" cy="50" rx="14.5" ry="16.5" fill="#c39a86"/>
    <ellipse cx="85.5" cy="43" rx="12" ry="6" fill="#cda692"/>
    <path d="M73 46.5 H98" stroke="#6d5a52" stroke-width="1.3" fill="none"/>
    <ellipse cx="79" cy="47" rx="5" ry="3.6" fill="none" stroke="#6b5b55" stroke-width=".8"/>
    <ellipse cx="92" cy="47" rx="5" ry="3.6" fill="none" stroke="#6b5b55" stroke-width=".8"/>
    <ellipse cx="85.5" cy="58.8" rx="4" ry="1.3" fill="#a33a44"/>
    <g fill="#e9e6da"><circle cx="68" cy="70" r="1.7"/><circle cx="58" cy="77" r="1.7"/><circle cx="70" cy="81" r="1.7"/><circle cx="79" cy="73" r="1.6"/><circle cx="92" cy="76" r="1.7"/><circle cx="103" cy="70" r="1.7"/><circle cx="113" cy="77" r="1.7"/><circle cx="101" cy="82" r="1.7"/><circle cx="83" cy="83" r="1.5"/><circle cx="120" cy="83" r="1.5"/><circle cx="50" cy="83" r="1.5"/><circle cx="111" cy="67" r="1.3"/><circle cx="62" cy="67" r="1.3"/></g>
  </g>
</svg>
<div class="abs" style="left:1.5px;top:72.5px;width:61px;height:12px;border-radius:2px;background:rgba(40,40,40,.55)"></div>
<svg class="abs" style="left:3.5px;top:73.5px" width="10" height="9" viewBox="0 0 10 9" fill="#fff"><rect x="0" y="6" width="1.8" height="3"/><rect x="2.7" y="4" width="1.8" height="5"/><rect x="5.4" y="2" width="1.8" height="7"/><rect x="8.1" y="0" width="1.8" height="9"/></svg>
<div class="t" id="tilename" style="left:17px;top:74px;font-size:8.3px;color:#fff;letter-spacing:-.5px">บังอร&nbsp; เสรีรัตน์</div>
</div>

<!-- PANEL -->
<div id="panel" class="abs">
<div id="phead" class="abs"></div>
<div class="t" id="ptitle" style="left:75.5px;top:13.200000000000003px;font-size:9.3px;font-weight:bold;color:#fff;letter-spacing:-.3px">Participants (97)</div>
<svg class="abs" style="left:215.10000000000002px;top:10.899999999999999px" width="11" height="11" viewBox="0 0 11 11" fill="none" stroke="#e4e4e4" stroke-width="1"><path d="M4.6 1.6 H2.6 Q1 1.6 1 3.2 V8.4 Q1 10 2.6 10 H7.8 Q9.4 10 9.4 8.4 V6.4"/><path d="M6.4 1 H10 V4.6 M10 1 L5.4 5.6"/></svg>
<svg class="abs" style="left:233.89999999999998px;top:11.899999999999999px" width="9" height="9" viewBox="0 0 9 9"><path d="M.8 .8 L8.2 8.2 M8.2 .8 L.8 8.2" stroke="#f0f0f0" stroke-width="1.1"/></svg>
<div class="abs" style="left:14px;top:38.7px;width:225.79999999999995px;height:20.799999999999997px;border:1px solid #5c5c5c;border-radius:5px"></div>
<svg class="abs" style="left:21.0px;top:44.5px" width="9" height="9" viewBox="0 0 9 9" fill="none" stroke="#b4b4b4" stroke-width="1"><circle cx="3.8" cy="3.8" r="2.9"/><path d="M5.9 5.9 L8.4 8.4"/></svg>
<div class="t" id="pfind" style="left:32.5px;top:44.599999999999994px;font-size:8.8px;color:#a9a9a9;letter-spacing:-.35px">Find a participant</div>
<div class="abs" style="left:3px;top:88.3px;width:241.29999999999995px;height:380.4px;background:#33282a"></div>
<div class="abs" style="left:244.5px;top:61px;width:4.3px;height:407.7px;border-radius:2.2px;background:#ebebf0"></div>
<div class="abs" style="left:244.5px;top:61px;width:4.3px;height:66px;border-radius:2.2px;background:#b9b9c6"></div>
<div class="abs av" style="left:15.799999999999955px;top:66.05px"><svg width="18.2" height="18.2" viewBox="0 0 18 18"><rect width="18" height="18" fill="#7f7a4e"/><ellipse cx="9" cy="9.2" rx="7.6" ry="8.2" fill="#b9ad6c"/><ellipse cx="9" cy="9.2" rx="6.6" ry="7.2" fill="none" stroke="#2f8a3e" stroke-width="1.5"/><ellipse cx="9" cy="9.2" rx="5" ry="5.6" fill="#e4d7a0"/><path d="M9 3.6 L11.6 10.4 H6.4Z" fill="#c0607a"/><circle cx="9" cy="8.6" r="1.5" fill="#5877b8"/><path d="M5.6 13 Q9 10.8 12.4 13 L11.2 15.4 H6.8Z" fill="#f6f3ea"/></svg></div>
<div class="t pn" id="pn0" style="left:41.5px;top:71.35px;"><span class="th">มหาวิทยาลัยราชภัฏลำปาง</span> (Host, me)</div>
<svg class="abs" style="left:192.70000000000005px;top:71.35px" width="8" height="8" viewBox="0 0 8 8"><circle cx="4" cy="4" r="3.7" fill="#ececec"/><circle cx="4" cy="4" r="1.9" fill="#e0353b"/></svg>
<svg class="abs" style="left:207.5px;top:68.95px" width="11" height="11.5" viewBox="0 0 11 11.5" fill="none" stroke="#8c8c8c" stroke-width=".9"><rect x="3.9" y=".8" width="3.2" height="5.8" rx="1.6" fill="#555"/><path d="M2.4 5.2 Q2.4 8.4 5.5 8.4 Q8.6 8.4 8.6 5.2 M5.5 8.4 V10.2 M4 10.5 H7"/></svg>
<svg class="abs" style="left:222.8px;top:68.95px" width="12.4" height="11.5" viewBox="0 0 12.4 11.5" fill="none" stroke="#7e7e7e" stroke-width=".9"><rect x=".7" y="2.4" width="7.8" height="6.6" rx="1.7"/><path d="M8.6 4.7 L11.5 3.1 V8.3 L8.6 6.7"/></svg>
<div class="abs av" style="left:15.799999999999955px;top:93.15px;background:#2d86d2"><span style="font-size:8.2px">บ</span></div>
<div class="t pn" id="pn1" style="left:41.5px;top:98.45px;"><span class="th">บังอร&nbsp; เสรีรัตน์</span> (Co-host, guest)</div>
<svg class="abs" style="left:191.20000000000005px;top:98.45px" width="11" height="8" viewBox="0 0 11 8"><rect width="11" height="8" rx="1.4" fill="#4bc962"/><path d="M5.5 6.2 V2.6 M3.8 4.1 L5.5 2.3 L7.2 4.1" stroke="#14301c" stroke-width="1.1" fill="none"/></svg>
<svg class="abs" style="left:207.5px;top:96.05px" width="11" height="11.5" viewBox="0 0 11 11.5" fill="none" stroke="#8c8c8c" stroke-width=".9"><rect x="3.9" y=".8" width="3.2" height="5.8" rx="1.6" fill="#8c8c8c"/><path d="M2.4 5.2 Q2.4 8.4 5.5 8.4 Q8.6 8.4 8.6 5.2 M5.5 8.4 V10.2 M4 10.5 H7"/></svg>
<svg class="abs" style="left:222.8px;top:96.05px" width="12.4" height="11.5" viewBox="0 0 12.4 11.5" fill="none" stroke="#7e7e7e" stroke-width=".9"><rect x=".7" y="2.4" width="7.8" height="6.6" rx="1.7"/><path d="M8.6 4.7 L11.5 3.1 V8.3 L8.6 6.7"/></svg>
<div class="abs av" style="left:15.799999999999955px;top:120.25px;background:#27ae5f"><span style="font-size:7.4px">Aห</span></div>
<div class="t pn" id="pn2" style="left:41.5px;top:125.55px;">A2_<span class="th">รัชดาพร หวลอารมณ์</span> (Guest)</div>
<svg class="abs" style="left:207.4px;top:123.15px" width="11" height="11.5" viewBox="0 0 11 11.5" fill="none" stroke="#dc5a55" stroke-width=".9"><rect x="3.9" y="1" width="3.2" height="5.6" rx="1.6"/><path d="M2.4 5.2 Q2.4 8.4 5.5 8.4 Q8.6 8.4 8.6 5.2 M5.5 8.4 V10.2 M4 10.5 H7"/><path d="M10.4 .5 L.8 10.8" stroke-width="1"/></svg>
<svg class="abs" style="left:222.8px;top:123.15px" width="12.4" height="11.5" viewBox="0 0 12.4 11.5" fill="none" stroke="#dc5a55" stroke-width=".9"><rect x=".7" y="2.4" width="7.8" height="6.6" rx="1.7"/><path d="M8.6 4.7 L11.5 3.1 V8.3 L8.6 6.7"/><path d="M11.2 .4 L1 10.9" stroke-width="1"/></svg>
<div class="abs av" style="left:15.799999999999955px;top:147.35px"><svg width="18.2" height="18.2" viewBox="0 0 18 18"><rect width="18" height="18" fill="#6f8898"/><rect width="18" height="6" fill="#8ea6b4"/><ellipse cx="9" cy="5.4" rx="2.7" ry="3.2" fill="#d9a98f"/><path d="M6.2 4.6 Q9 .6 11.8 4.6 Q9 3.2 6.2 4.6Z" fill="#2b2320"/><path d="M2.6 18 Q2.8 9.4 9 8.8 Q15.2 9.4 15.4 18Z" fill="#dab8dc"/><path d="M8 9 L9 11 L10 9Z" fill="#c99a86"/></svg></div>
<div class="t pn" id="pn3" style="left:41.5px;top:152.65px;">AKKAJOHN (Guest)</div>
<svg class="abs" style="left:207.4px;top:150.25px" width="11" height="11.5" viewBox="0 0 11 11.5" fill="none" stroke="#dc5a55" stroke-width=".9"><rect x="3.9" y="1" width="3.2" height="5.6" rx="1.6"/><path d="M2.4 5.2 Q2.4 8.4 5.5 8.4 Q8.6 8.4 8.6 5.2 M5.5 8.4 V10.2 M4 10.5 H7"/><path d="M10.4 .5 L.8 10.8" stroke-width="1"/></svg>
<svg class="abs" style="left:222.8px;top:150.25px" width="12.4" height="11.5" viewBox="0 0 12.4 11.5" fill="none" stroke="#dc5a55" stroke-width=".9"><rect x=".7" y="2.4" width="7.8" height="6.6" rx="1.7"/><path d="M8.6 4.7 L11.5 3.1 V8.3 L8.6 6.7"/><path d="M11.2 .4 L1 10.9" stroke-width="1"/></svg>
<div class="abs av" style="left:15.799999999999955px;top:174.45px;background:#cc392b"><span style="font-size:8.2px">A</span></div>
<div class="t pn" id="pn4" style="left:41.5px;top:179.75px;">Amarita (Guest)</div>
<svg class="abs" style="left:207.4px;top:177.35px" width="11" height="11.5" viewBox="0 0 11 11.5" fill="none" stroke="#dc5a55" stroke-width=".9"><rect x="3.9" y="1" width="3.2" height="5.6" rx="1.6"/><path d="M2.4 5.2 Q2.4 8.4 5.5 8.4 Q8.6 8.4 8.6 5.2 M5.5 8.4 V10.2 M4 10.5 H7"/><path d="M10.4 .5 L.8 10.8" stroke-width="1"/></svg>
<svg class="abs" style="left:222.8px;top:177.35px" width="12.4" height="11.5" viewBox="0 0 12.4 11.5" fill="none" stroke="#dc5a55" stroke-width=".9"><rect x=".7" y="2.4" width="7.8" height="6.6" rx="1.7"/><path d="M8.6 4.7 L11.5 3.1 V8.3 L8.6 6.7"/><path d="M11.2 .4 L1 10.9" stroke-width="1"/></svg>
<div class="abs av" style="left:15.799999999999955px;top:201.55px"><svg width="18.2" height="18.2" viewBox="0 0 18 18"><rect width="18" height="18" fill="#dedbd0"/><rect x="1.5" y="2.5" width="9" height="12" fill="#d0ccbe"/><rect x="3" y="1" width="5" height="1.6" fill="#b98e5a"/><path d="M11 18 Q11.4 11.4 14 11 Q16.8 11.4 17.2 18Z" fill="#3f5b3c"/><circle cx="14" cy="9.2" r="1.9" fill="#c9a58e"/><path d="M12 9 Q14 5.6 16 9 Q14 7.8 12 9Z" fill="#2a2420"/><rect y="16.4" width="18" height="1.6" fill="#6e5a40"/></svg></div>
<div class="t pn" id="pn5" style="left:41.5px;top:206.85px;">Angkhana Chuajedton (Guest)</div>
<svg class="abs" style="left:207.4px;top:204.45px" width="11" height="11.5" viewBox="0 0 11 11.5" fill="none" stroke="#dc5a55" stroke-width=".9"><rect x="3.9" y="1" width="3.2" height="5.6" rx="1.6"/><path d="M2.4 5.2 Q2.4 8.4 5.5 8.4 Q8.6 8.4 8.6 5.2 M5.5 8.4 V10.2 M4 10.5 H7"/><path d="M10.4 .5 L.8 10.8" stroke-width="1"/></svg>
<svg class="abs" style="left:222.8px;top:204.45px" width="12.4" height="11.5" viewBox="0 0 12.4 11.5" fill="none" stroke="#dc5a55" stroke-width=".9"><rect x=".7" y="2.4" width="7.8" height="6.6" rx="1.7"/><path d="M8.6 4.7 L11.5 3.1 V8.3 L8.6 6.7"/><path d="M11.2 .4 L1 10.9" stroke-width="1"/></svg>
<div class="abs av" style="left:15.799999999999955px;top:228.65px"><svg width="18.2" height="18.2" viewBox="0 0 18 18"><rect width="18" height="18" fill="#86c0e6"/><rect x="13" y="8" width="5" height="10" fill="#8f9aa0"/><ellipse cx="8.6" cy="5.6" rx="6.2" ry="2.8" fill="#f2efe6"/><ellipse cx="8.6" cy="4.4" rx="3.8" ry="2.6" fill="#faf8f2"/><ellipse cx="8.6" cy="8.6" rx="3" ry="3" fill="#c79a7e"/><rect x="5.8" y="7.6" width="5.6" height="1.5" fill="#2a2a2a"/><path d="M2.4 18 Q2.8 12 8.6 11.6 Q14.4 12 14.8 18Z" fill="#d2603a"/><path d="M7 12 L8.6 18 L10.2 12Z" fill="#e8d36a"/><path d="M0 12 L4 13 L3 18 H0Z" fill="#1e1e1e"/></svg></div>
<div class="t pn" id="pn6" style="left:41.5px;top:233.95px;">Anukit Saokaw (Guest)</div>
<svg class="abs" style="left:223.1px;top:231.55px" width="11" height="11.5" viewBox="0 0 11 11.5" fill="none" stroke="#dc5a55" stroke-width=".9"><rect x="3.9" y="1" width="3.2" height="5.6" rx="1.6"/><path d="M2.4 5.2 Q2.4 8.4 5.5 8.4 Q8.6 8.4 8.6 5.2 M5.5 8.4 V10.2 M4 10.5 H7"/><path d="M10.4 .5 L.8 10.8" stroke-width="1"/></svg>
<div class="abs av" style="left:15.799999999999955px;top:255.75px;background:#e05a0b"><span style="font-size:8.2px">A</span></div>
<div class="t pn" id="pn7" style="left:41.5px;top:261.05px;">araya (Guest)</div>
<svg class="abs" style="left:207.4px;top:258.65px" width="11" height="11.5" viewBox="0 0 11 11.5" fill="none" stroke="#dc5a55" stroke-width=".9"><rect x="3.9" y="1" width="3.2" height="5.6" rx="1.6"/><path d="M2.4 5.2 Q2.4 8.4 5.5 8.4 Q8.6 8.4 8.6 5.2 M5.5 8.4 V10.2 M4 10.5 H7"/><path d="M10.4 .5 L.8 10.8" stroke-width="1"/></svg>
<svg class="abs" style="left:222.8px;top:258.65px" width="12.4" height="11.5" viewBox="0 0 12.4 11.5" fill="none" stroke="#dc5a55" stroke-width=".9"><rect x=".7" y="2.4" width="7.8" height="6.6" rx="1.7"/><path d="M8.6 4.7 L11.5 3.1 V8.3 L8.6 6.7"/><path d="M11.2 .4 L1 10.9" stroke-width="1"/></svg>
<div class="abs av" style="left:15.799999999999955px;top:282.85px;background:#1aa585"><span style="font-size:8.2px">C</span></div>
<div class="t pn" id="pn8" style="left:41.5px;top:288.15px;">C.Raktham (Guest)</div>
<svg class="abs" style="left:207.4px;top:285.75px" width="11" height="11.5" viewBox="0 0 11 11.5" fill="none" stroke="#dc5a55" stroke-width=".9"><rect x="3.9" y="1" width="3.2" height="5.6" rx="1.6"/><path d="M2.4 5.2 Q2.4 8.4 5.5 8.4 Q8.6 8.4 8.6 5.2 M5.5 8.4 V10.2 M4 10.5 H7"/><path d="M10.4 .5 L.8 10.8" stroke-width="1"/></svg>
<svg class="abs" style="left:222.8px;top:285.75px" width="12.4" height="11.5" viewBox="0 0 12.4 11.5" fill="none" stroke="#dc5a55" stroke-width=".9"><rect x=".7" y="2.4" width="7.8" height="6.6" rx="1.7"/><path d="M8.6 4.7 L11.5 3.1 V8.3 L8.6 6.7"/><path d="M11.2 .4 L1 10.9" stroke-width="1"/></svg>
<div class="abs av" style="left:15.799999999999955px;top:309.95px"><svg width="18.2" height="18.2" viewBox="0 0 18 18"><rect width="18" height="18" fill="#8a6a48"/><ellipse cx="9" cy="9.4" rx="6" ry="7.2" fill="#d2a27e"/><path d="M3 7.4 Q9 -2.4 15 7.4 Q9 3 3 7.4Z" fill="#1f1814"/><path d="M5.4 8.6 H7.8 M10.2 8.6 H12.6" stroke="#3a2a22" stroke-width=".8"/><path d="M7.4 13 H10.6" stroke="#9a5a4a" stroke-width=".8"/><path d="M0 18 Q1.4 15.6 5 15.4 L9 17.4 L13 15.4 Q16.6 15.6 18 18Z" fill="#6b5a48"/></svg></div>
<div class="t pn" id="pn9" style="left:41.5px;top:315.25px;">ChaiwutKomat@LPRU (Guest)</div>
<svg class="abs" style="left:207.4px;top:312.85px" width="11" height="11.5" viewBox="0 0 11 11.5" fill="none" stroke="#dc5a55" stroke-width=".9"><rect x="3.9" y="1" width="3.2" height="5.6" rx="1.6"/><path d="M2.4 5.2 Q2.4 8.4 5.5 8.4 Q8.6 8.4 8.6 5.2 M5.5 8.4 V10.2 M4 10.5 H7"/><path d="M10.4 .5 L.8 10.8" stroke-width="1"/></svg>
<svg class="abs" style="left:222.8px;top:312.85px" width="12.4" height="11.5" viewBox="0 0 12.4 11.5" fill="none" stroke="#dc5a55" stroke-width=".9"><rect x=".7" y="2.4" width="7.8" height="6.6" rx="1.7"/><path d="M8.6 4.7 L11.5 3.1 V8.3 L8.6 6.7"/><path d="M11.2 .4 L1 10.9" stroke-width="1"/></svg>
<div class="abs av" style="left:15.799999999999955px;top:337.05px"><svg width="18.2" height="18.2" viewBox="0 0 18 18"><rect width="18" height="18" fill="#e6eadf"/><rect width="18" height="7" fill="#9fb48a"/><circle cx="3" cy="3" r="2.4" fill="#6f8a5c"/><circle cx="15" cy="4" r="2.6" fill="#7d966a"/><ellipse cx="8.4" cy="7.6" rx="4" ry="4.4" fill="#d8b49c"/><path d="M4 6.6 Q8.4 -.4 12.8 6.6 Q8.4 3.8 4 6.6Z" fill="#2b2622"/><rect x="5" y="6.6" width="6.8" height="1.5" fill="#2e2e2e"/><path d="M0 18 Q1.4 12.4 8.4 12.2 Q15.6 12.4 17 18Z" fill="#f7f7f5"/><path d="M5 12.6 L12 18" stroke="#3a3a3a" stroke-width="1"/></svg></div>
<div class="t pn" id="pn10" style="left:41.5px;top:342.35px;">Chaowoot.s (Guest)</div>
<svg class="abs" style="left:207.4px;top:339.95px" width="11" height="11.5" viewBox="0 0 11 11.5" fill="none" stroke="#dc5a55" stroke-width=".9"><rect x="3.9" y="1" width="3.2" height="5.6" rx="1.6"/><path d="M2.4 5.2 Q2.4 8.4 5.5 8.4 Q8.6 8.4 8.6 5.2 M5.5 8.4 V10.2 M4 10.5 H7"/><path d="M10.4 .5 L.8 10.8" stroke-width="1"/></svg>
<svg class="abs" style="left:222.8px;top:339.95px" width="12.4" height="11.5" viewBox="0 0 12.4 11.5" fill="none" stroke="#dc5a55" stroke-width=".9"><rect x=".7" y="2.4" width="7.8" height="6.6" rx="1.7"/><path d="M8.6 4.7 L11.5 3.1 V8.3 L8.6 6.7"/><path d="M11.2 .4 L1 10.9" stroke-width="1"/></svg>
<div class="abs av" style="left:15.799999999999955px;top:364.15px;background:#9146b5"><span style="font-size:7.4px">CL</span></div>
<div class="t pn" id="pn11" style="left:41.5px;top:369.45px;">Charuwan Limphaiboon (Guest)</div>
<svg class="abs" style="left:207.4px;top:367.05px" width="11" height="11.5" viewBox="0 0 11 11.5" fill="none" stroke="#dc5a55" stroke-width=".9"><rect x="3.9" y="1" width="3.2" height="5.6" rx="1.6"/><path d="M2.4 5.2 Q2.4 8.4 5.5 8.4 Q8.6 8.4 8.6 5.2 M5.5 8.4 V10.2 M4 10.5 H7"/><path d="M10.4 .5 L.8 10.8" stroke-width="1"/></svg>
<svg class="abs" style="left:222.8px;top:367.05px" width="12.4" height="11.5" viewBox="0 0 12.4 11.5" fill="none" stroke="#dc5a55" stroke-width=".9"><rect x=".7" y="2.4" width="7.8" height="6.6" rx="1.7"/><path d="M8.6 4.7 L11.5 3.1 V8.3 L8.6 6.7"/><path d="M11.2 .4 L1 10.9" stroke-width="1"/></svg>
<div class="abs av" style="left:15.799999999999955px;top:391.25px;background:#cc392b"><span style="font-size:7.4px">CM</span></div>
<div class="t pn" id="pn12" style="left:41.5px;top:396.55px;">Chatnaree Meesukko (Guest)</div>
<svg class="abs" style="left:207.4px;top:394.15px" width="11" height="11.5" viewBox="0 0 11 11.5" fill="none" stroke="#dc5a55" stroke-width=".9"><rect x="3.9" y="1" width="3.2" height="5.6" rx="1.6"/><path d="M2.4 5.2 Q2.4 8.4 5.5 8.4 Q8.6 8.4 8.6 5.2 M5.5 8.4 V10.2 M4 10.5 H7"/><path d="M10.4 .5 L.8 10.8" stroke-width="1"/></svg>
<svg class="abs" style="left:222.8px;top:394.15px" width="12.4" height="11.5" viewBox="0 0 12.4 11.5" fill="none" stroke="#dc5a55" stroke-width=".9"><rect x=".7" y="2.4" width="7.8" height="6.6" rx="1.7"/><path d="M8.6 4.7 L11.5 3.1 V8.3 L8.6 6.7"/><path d="M11.2 .4 L1 10.9" stroke-width="1"/></svg>
<div class="abs av" style="left:15.799999999999955px;top:418.35px;background:#2d86d2"><span style="font-size:7.4px">CW</span></div>
<div class="t pn" id="pn13" style="left:41.5px;top:423.65px;">Chitchanok Wongkhrua (Guest)</div>
<svg class="abs" style="left:207.4px;top:421.25px" width="11" height="11.5" viewBox="0 0 11 11.5" fill="none" stroke="#dc5a55" stroke-width=".9"><rect x="3.9" y="1" width="3.2" height="5.6" rx="1.6"/><path d="M2.4 5.2 Q2.4 8.4 5.5 8.4 Q8.6 8.4 8.6 5.2 M5.5 8.4 V10.2 M4 10.5 H7"/><path d="M10.4 .5 L.8 10.8" stroke-width="1"/></svg>
<svg class="abs" style="left:222.8px;top:421.25px" width="12.4" height="11.5" viewBox="0 0 12.4 11.5" fill="none" stroke="#dc5a55" stroke-width=".9"><rect x=".7" y="2.4" width="7.8" height="6.6" rx="1.7"/><path d="M8.6 4.7 L11.5 3.1 V8.3 L8.6 6.7"/><path d="M11.2 .4 L1 10.9" stroke-width="1"/></svg>
<div class="abs av" style="left:15.799999999999955px;top:445.45px;background:#e05a0b"><span style="font-size:8.2px">D</span></div>
<div class="t pn" id="pn14" style="left:41.5px;top:450.75px;">Donrudee (Guest)</div>
<svg class="abs" style="left:207.4px;top:448.35px" width="11" height="11.5" viewBox="0 0 11 11.5" fill="none" stroke="#dc5a55" stroke-width=".9"><rect x="3.9" y="1" width="3.2" height="5.6" rx="1.6"/><path d="M2.4 5.2 Q2.4 8.4 5.5 8.4 Q8.6 8.4 8.6 5.2 M5.5 8.4 V10.2 M4 10.5 H7"/><path d="M10.4 .5 L.8 10.8" stroke-width="1"/></svg>
<svg class="abs" style="left:222.8px;top:448.35px" width="12.4" height="11.5" viewBox="0 0 12.4 11.5" fill="none" stroke="#dc5a55" stroke-width=".9"><rect x=".7" y="2.4" width="7.8" height="6.6" rx="1.7"/><path d="M8.6 4.7 L11.5 3.1 V8.3 L8.6 6.7"/><path d="M11.2 .4 L1 10.9" stroke-width="1"/></svg>
<div class="abs pb" id="bi" style="left:39.39999999999998px;top:480.29999999999995px;width:35.8px;height:15.6px"><span>Invite</span></div>
<div class="abs pb" id="bm" style="left:113px;top:480.29999999999995px;width:45.6px;height:15.6px"><span>Mute all</span></div>
<div class="abs pb" id="bd" style="left:196.29999999999995px;top:480.29999999999995px;width:15.7px;height:15.6px"><span><b style="letter-spacing:.3px;position:relative;top:-2.2px">...</b></span></div>
</div>

<!-- TOOLBAR -->
<div id="toolbar" class="abs">
<svg class="abs" style="left:29.200000000000003px;top:6.800000000000011px" width="12" height="16" viewBox="0 0 12 16" fill="none" stroke="#f2f2f2" stroke-width="1.1"><rect x="3.6" y=".7" width="4.8" height="9" rx="2.4"/><path d="M1.2 7.4 Q1.2 12 6 12 Q10.8 12 10.8 7.4 M6 12 V15 M3.4 15.2 H8.6"/></svg>
<div class="t tl" id="tl0" style="left:-5px;top:25.900000000000034px;width:80px">Audio</div>
<svg class="abs" style="left:52.5px;top:12.599999999999966px" width="7" height="5" viewBox="0 0 7 5"><path d="M.8 4 L3.5 1.2 L6.2 4" fill="none" stroke="#e8e8e8" stroke-width="1.1"/></svg>
<svg class="abs" style="left:88.7px;top:9.300000000000011px" width="18" height="12" viewBox="0 0 18 12" fill="none" stroke="#f2f2f2" stroke-width="1.1"><rect x=".7" y=".9" width="11.2" height="10" rx="2.4"/><path d="M12 4.6 L16.4 1.8 V10 L12 7.2"/></svg>
<div class="t tl" id="tl1" style="left:57.2px;top:25.900000000000034px;width:80px">Video</div>
<svg class="abs" style="left:118.0px;top:12.599999999999966px" width="7" height="5" viewBox="0 0 7 5"><path d="M.8 4 L3.5 1.2 L6.2 4" fill="none" stroke="#e8e8e8" stroke-width="1.1"/></svg>
<svg class="abs" style="left:256.6px;top:8.599999999999966px" width="14" height="13" viewBox="0 0 14 13" fill="none" stroke="#f2f2f2" stroke-width="1.1"><circle cx="4" cy="2.6" r="1.9"/><circle cx="9.6" cy="4.8" r="1.9"/><path d="M6.4 6.6 Q5.4 5.6 4 5.6 Q.8 5.6 .8 8.4 V9.4 Q.8 10.6 2 10.6 H4.6"/><rect x="5.8" y="8" width="7.6" height="4.4" rx="2.2"/></svg>
<div class="t" id="n97" style="left:274.9px;top:9.599999999999966px;font-size:8.4px;color:#e4e4e4;letter-spacing:-.3px">97</div>
<div class="t tl" id="tl2" style="left:223.8px;top:25.900000000000034px;width:80px">Participants</div>
<svg class="abs" style="left:294.9px;top:12.599999999999966px" width="7" height="5" viewBox="0 0 7 5"><path d="M.8 4 L3.5 1.2 L6.2 4" fill="none" stroke="#e8e8e8" stroke-width="1.1"/></svg>
<svg class="abs" style="left:329.6px;top:8.300000000000011px" width="15" height="14" viewBox="0 0 15 14" fill="none" stroke="#f2f2f2" stroke-width="1.1"><path d="M2.6 .8 H12.4 Q14.2 .8 14.2 2.6 V8 Q14.2 9.8 12.4 9.8 H7 L3.8 12.8 V9.8 H2.6 Q.8 9.8 .8 8 V2.6 Q.8 .8 2.6 .8Z"/></svg>
<div class="t tl" id="tl3" style="left:297.5px;top:25.900000000000034px;width:80px">Chat</div>
<svg class="abs" style="left:355.0px;top:12.599999999999966px" width="7" height="5" viewBox="0 0 7 5"><path d="M.8 4 L3.5 1.2 L6.2 4" fill="none" stroke="#e8e8e8" stroke-width="1.1"/></svg>
<svg class="abs" style="left:385.6px;top:8.099999999999966px" width="17" height="14" viewBox="0 0 17 14" fill="none" stroke="#f2f2f2" stroke-width="1.1"><path d="M8.5 13 Q.8 8.4 .8 4.4 Q.8 .8 4.4 .8 Q7 .8 8.5 3.2 Q10 .8 12.6 .8 Q16.2 .8 16.2 4.4 Q16.2 8.4 8.5 13Z"/></svg>
<div class="t tl" id="tl4" style="left:354px;top:25.900000000000034px;width:80px">React</div>
<svg class="abs" style="left:408.5px;top:12.599999999999966px" width="7" height="5" viewBox="0 0 7 5"><path d="M.8 4 L3.5 1.2 L6.2 4" fill="none" stroke="#e8e8e8" stroke-width="1.1"/></svg>
<svg class="abs" style="left:445px;top:8.400000000000034px" width="17" height="13" viewBox="0 0 17 13" fill="none" stroke="#f2f2f2" stroke-width="1.1"><rect x=".7" y=".7" width="15.6" height="11.4" rx="1.8"/><path d="M8.5 9.6 V3.4 M6 5.8 L8.5 3.2 L11 5.8"/></svg>
<div class="t tl" id="tl5" style="left:413.7px;top:25.900000000000034px;width:80px">Share</div>
<svg class="abs" style="left:474.4px;top:12.599999999999966px" width="7" height="5" viewBox="0 0 7 5"><path d="M.8 4 L3.5 1.2 L6.2 4" fill="none" stroke="#e8e8e8" stroke-width="1.1"/></svg>
<div class="abs" style="left:494px;top:12.500000000000057px;width:1px;height:14.4px;background:#4a4a4a"></div>
<svg class="abs" style="left:521.6px;top:6.800000000000011px" width="16" height="16" viewBox="0 0 16 16" fill="none" stroke="#f2f2f2" stroke-width="1.05" stroke-linejoin="round"><path d="M15.12 6.41 L15.12 9.59 L13.27 9.19 L12.57 10.88 L14.16 11.91 L11.91 14.16 L10.88 12.57 L9.19 13.27 L9.59 15.12 L6.41 15.12 L6.81 13.27 L5.12 12.57 L4.09 14.16 L1.84 11.91 L3.43 10.88 L2.73 9.19 L0.88 9.59 L0.88 6.41 L2.73 6.81 L3.43 5.12 L1.84 4.09 L4.09 1.84 L5.12 3.43 L6.81 2.73 L6.41 0.88 L9.59 0.88 L9.19 2.73 L10.88 3.43 L11.91 1.84 L14.16 4.09 L12.57 5.12 L13.27 6.81Z"/><circle cx="8" cy="8" r="2"/></svg>
<div class="t tl" id="tl6" style="left:489.79999999999995px;top:25.900000000000034px;width:80px">Settings</div>
<svg class="abs" style="left:575.4px;top:6.300000000000011px" width="17" height="17" viewBox="0 0 17 17"><circle cx="8.5" cy="8.5" r="7.7" fill="none" stroke="#f2f2f2" stroke-width="1.1"/><circle cx="5" cy="8.5" r=".9" fill="#f2f2f2"/><circle cx="8.5" cy="8.5" r=".9" fill="#f2f2f2"/><circle cx="12" cy="8.5" r=".9" fill="#f2f2f2"/></svg>
<div class="t tl" id="tl7" style="left:543.9px;top:25.900000000000034px;width:80px">More</div>
<svg class="abs" style="left:720.6px;top:6.300000000000011px" width="18" height="17" viewBox="0 0 18 17"><polygon points="16.90,8.50 12.95,15.34 5.05,15.34 1.10,8.50 5.05,1.66 12.95,1.66" fill="none" stroke="#d8174f" stroke-width="1.5" stroke-linejoin="round"/><path d="M6.3 5.8 L11.7 11.2 M11.7 5.8 L6.3 11.2" stroke="#fff" stroke-width="1.9"/></svg>
<div class="t tl" id="tl8" style="left:689.6px;top:25.900000000000034px;width:80px">End</div>
</div>

<!-- TASKBAR -->
<div id="taskbar" class="abs">
<svg class="abs" style="left:13.7px;top:8.699999999999932px" width="16" height="16" viewBox="0 0 16 16"><defs><linearGradient id="wg" x1="0" y1="0" x2="1" y2="1"><stop offset="0" stop-color="#58c8fb"/><stop offset="1" stop-color="#0a78d6"/></linearGradient></defs><rect x="0" y="0" width="7.5" height="7.5" fill="#3fb4f3"/><rect x="8.5" y="0" width="7.5" height="7.5" fill="#2aa3ee"/><rect x="0" y="8.5" width="7.5" height="7.5" fill="#1f95e6"/><rect x="8.5" y="8.5" width="7.5" height="7.5" fill="#0f80da"/></svg>
<div class="abs" style="left:38.8px;top:6.2999999999999545px;width:145.5px;height:20px;border-radius:10px;background:#fbfbfc;border:1px solid #dcdde1"></div>
<svg class="abs" style="left:45.25px;top:10.799999999999955px" width="11" height="11" viewBox="0 0 11 11" fill="none" stroke="#222" stroke-width="1.3"><circle cx="4.6" cy="4.6" r="3.5"/><path d="M7.2 7.2 L10.2 10.2"/></svg>
<div class="t" id="ksearch" style="left:63px;top:11.299999999999955px;font-size:9.6px;color:#666;letter-spacing:-.4px">Search</div>
<div class="abs" style="left:197px;top:8.799999999999955px;width:11px;height:11px;border-radius:1.5px;background:linear-gradient(135deg,#c9c9c9,#f4f4f4)"></div>
<div class="abs" style="left:193px;top:12.299999999999955px;width:11px;height:11px;border-radius:1.5px;background:#1c1c1c;box-shadow:1.5px -1.5px 0 0 #8b8b8b"></div>
<svg class="abs" style="left:222px;top:7.7999999999999545px" width="16" height="16" viewBox="0 0 16 16"><circle cx="8" cy="8" r="7.6" fill="#fff"/><path d="M8 8 L1.42 4.2 A7.6 7.6 0 0 1 14.58 4.2 Z" fill="#e33b2e"/><path d="M8 8 L14.58 4.2 A7.6 7.6 0 0 1 8 15.6 Z" fill="#fcc934"/><path d="M8 8 L8 15.6 A7.6 7.6 0 0 1 1.42 4.2 Z" fill="#2da94f"/><circle cx="8" cy="8" r="3.6" fill="#fff"/><circle cx="8" cy="8" r="2.8" fill="#4285f4"/></svg>
<div class="t kt" id="k0" style="left:243.7px;top:11.5px;letter-spacing:-.74px">รูปภาพ - Google ไดรฟ์ - C</div>
<div class="abs" style="left:228.2px;top:27.09999999999991px;width:3.6px;height:1.8px;border-radius:.9px;background:#7d7f85"></div>
<svg class="abs" style="left:342.4px;top:9.899999999999977px" width="16" height="12.4" viewBox="0 0 16 12.4"><path d="M.6 0 H5.4 L6.8 1.6 H15.4 Q16 1.6 16 2.2 V4 H0 V.6 Q0 0 .6 0Z" fill="#e2a21f"/><rect x="0" y="2.4" width="16" height="10" rx=".8" fill="#f9cf4f"/><rect x="0" y="10.6" width="16" height="1.8" rx=".8" fill="#eeb93a"/></svg>
<div class="t kt" id="k1" style="left:363.7px;top:11.5px;letter-spacing:-.5px">Screenshots - File Explo</div>
<div class="abs" style="left:348.2px;top:27.09999999999991px;width:3.6px;height:1.8px;border-radius:.9px;background:#7d7f85"></div>
<svg class="abs" style="left:462.8px;top:9.299999999999955px" width="15.4" height="12.8" viewBox="0 0 15.4 12.8"><path d="M.6 0 H5 L6.4 1.6 H14.8 Q15.4 1.6 15.4 2.2 V4 H0 V.6 Q0 0 .6 0Z" fill="#148a72"/><rect x="0" y="2.4" width="15.4" height="10.4" rx=".8" fill="#22b398"/><path d="M7.7 4.2 V8.6 M5.6 6.8 L7.7 8.9 L9.8 6.8 M5 10.6 H10.4" stroke="#fff" stroke-width="1.2" fill="none"/></svg>
<div class="t kt" id="k2" style="left:484px;top:11.5px;letter-spacing:-.45px">Downloads - File Explor</div>
<div class="abs" style="left:468.2px;top:27.09999999999991px;width:3.6px;height:1.8px;border-radius:.9px;background:#7d7f85"></div>
<div class="abs" style="left:577.9px;top:3.199999999999932px;width:84.4px;height:26px;border-radius:3.5px;background:#f9fafc;border:1px solid #e2e4e9"></div>
<div class="abs zi" style="left:582.4px;top:8.0px"><span>zoom</span></div>
<div class="t kt" id="k3" style="left:603.8px;top:11.5px;letter-spacing:-.35px">Zoom Meeting</div>
<div class="abs" style="left:585.0px;top:26.699999999999932px;width:10.8px;height:2.4px;border-radius:1.2px;background:#0f6cd0"></div>
<div class="abs zi" style="left:670.5px;top:8.0px"><span>zoom</span></div>
<div class="t kt" id="k4" style="left:692px;top:11.5px;letter-spacing:-.44px">Zoom Workplace</div>
<div class="abs" style="left:676.7px;top:27.09999999999991px;width:3.6px;height:1.8px;border-radius:.9px;background:#7d7f85"></div>
<svg class="abs" style="left:828.2px;top:13.199999999999932px" width="9" height="6" viewBox="0 0 9 6"><path d="M.8 5 L4.5 1.2 L8.2 5" fill="none" stroke="#222" stroke-width="1.2"/></svg>
<div class="abs" style="left:848.4px;top:10.799999999999955px;width:10.8px;height:10.8px;border-radius:50%;background:#0b5cff;color:#fff;font-size:5px;line-height:10.4px;text-align:center;font-weight:bold;letter-spacing:-.3px">zm</div>
<svg class="abs" style="left:870.4px;top:10.199999999999932px" width="9" height="12" viewBox="0 0 9 12" fill="none" stroke="#2c6fd2" stroke-width="1"><rect x="2.7" y=".6" width="3.6" height="6.6" rx="1.8"/><path d="M.8 5.6 Q.8 9 4.5 9 Q8.2 9 8.2 5.6 M4.5 9 V11.4"/></svg>
<div class="t" id="keng" style="left:893.2px;top:12.099999999999909px;font-size:8.3px;color:#222;letter-spacing:-.45px">ENG</div>
<svg class="abs" style="left:920.4px;top:9.899999999999977px" width="12" height="12" viewBox="0 0 12 12" fill="none" stroke="#222" stroke-width="1"><rect x=".6" y="1" width="7.6" height="7" rx=".6"/><path d="M3 10.6 H7 M4.4 8 V10.6 M10 1 V10.8 M8.8 3.4 H11.2 V1.2 H8.8Z"/></svg>
<svg class="abs" style="left:936.2px;top:10.899999999999977px" width="10.5" height="10.5" viewBox="0 0 10.5 10.5" fill="none" stroke="#222" stroke-width=".95"><path d="M.6 3.6 H2.6 L5.2 1.2 V9.3 L2.6 6.9 H.6Z"/><path d="M6.6 3.6 Q7.6 5.25 6.6 6.9 M8 2.2 Q9.8 5.25 8 8.3"/></svg>
<svg class="abs" style="left:952.3px;top:10.699999999999932px" width="11.5" height="10.5" viewBox="0 0 11.5 10.5" fill="none" stroke="#222" stroke-width="1"><rect x="1" y="3" width="8.6" height="5.8" rx="1.2"/><rect x="1.8" y="3.8" width="4.4" height="4.2" fill="#222" stroke="none"/><path d="M10.4 4.8 V7"/><path d="M2.4 .6 V2.6 M4.4 .6 V2.6" stroke-width=".9"/></svg>
<div class="t kc" id="ktime" style="right:13px;top:6.599999999999909px;letter-spacing:-.7px">10:07</div>
<div class="t kc" id="kdate" style="right:13px;top:17.399999999999977px">26/2/2569</div>
</div>

<!-- TOOLTIP -->
<div class="abs" style="left:997.3px;top:60px;width:27px;height:13px;background:#fbfbfb;border:1px solid #d0d0d0"></div><div class="t" id="tip" style="left:1000.3px;top:62.2px;font-size:8.6px;color:#333;letter-spacing:-.4px">Close</div>

</div>
</body>
</html>
